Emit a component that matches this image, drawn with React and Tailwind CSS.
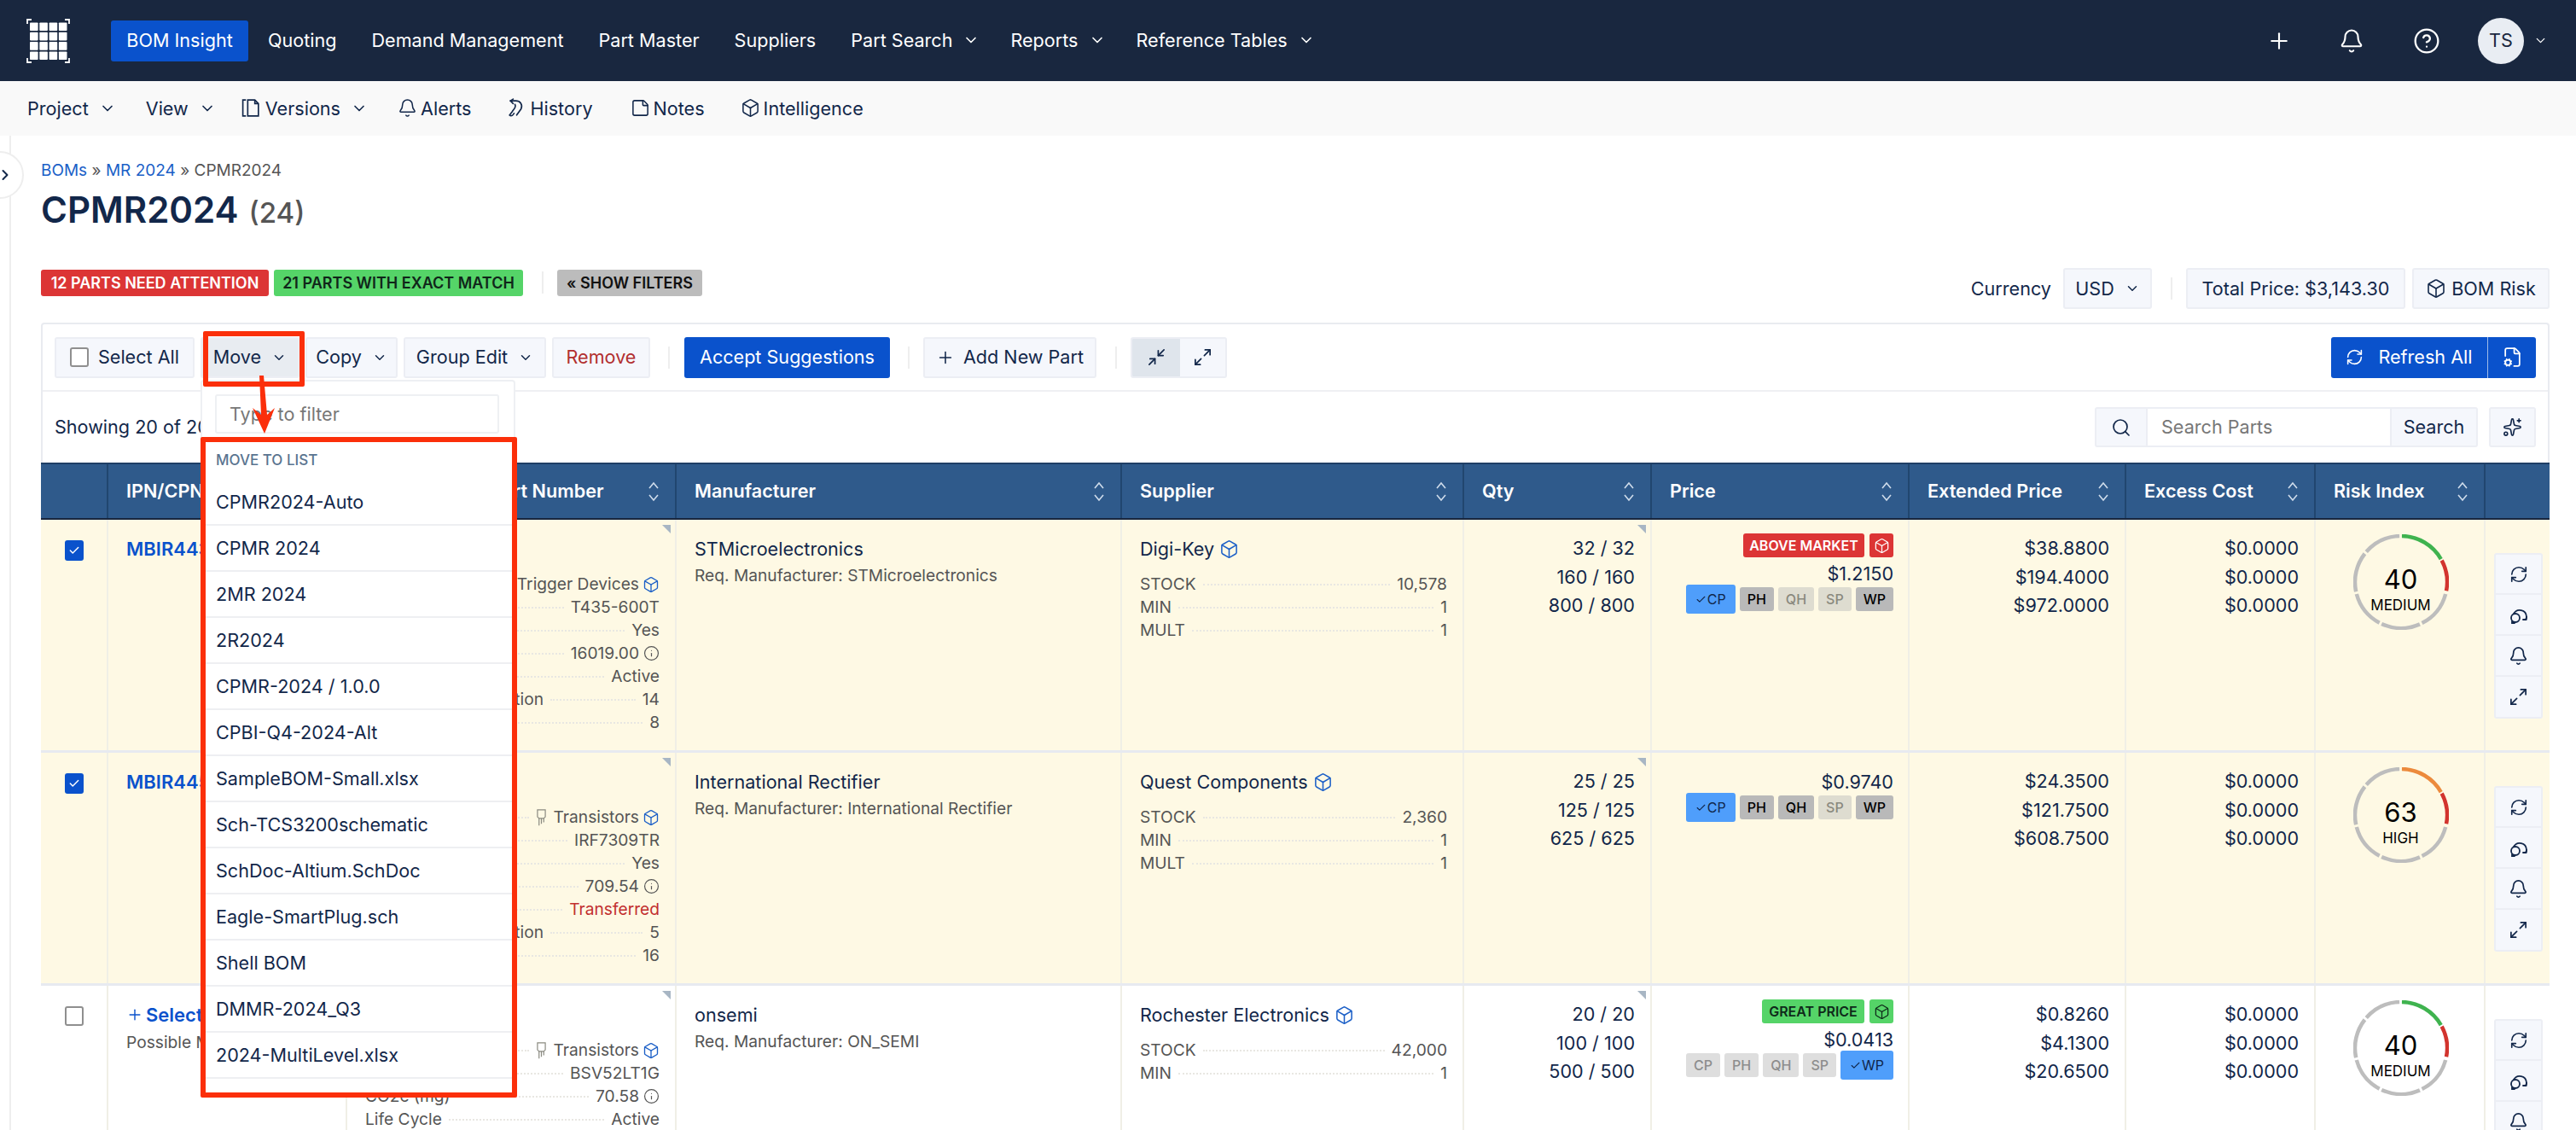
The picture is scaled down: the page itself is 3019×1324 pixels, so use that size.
import {
  Bell, Box, ChevronDown, ChevronRight, CircleHelp, FileCog, Info, Maximize2, Minimize2, Plus, RefreshCw, Search, StickyNote, Sparkles, Check,
} from "lucide-react";

const COLS = "grid-cols-[79px_280px_386px_522px_401px_220px_302px_254px_222px_199px_75px]";
const MENU = ["CPMR2024-Auto", "CPMR 2024", "2MR 2024", "2R2024", "CPMR-2024 / 1.0.0", "CPBI-Q4-2024-Alt", "SampleBOM-Small.xlsx", "Sch-TCS3200schematic", "SchDoc-Altium.SchDoc", "Eagle-SmartPlug.sch", "Shell BOM", "DMMR-2024_Q3", "2024-MultiLevel.xlsx", "CPMR-2024"];

const ROWS = [
  {
    selected: true,
    ipn: "MBIR4435",
    rowBg: "bg-[#fef9e4]",
    spec: [["Category", "Trigger Devices", "cat"], ["Mfr Part", "T435-600T"], ["RoHS", "Yes"], ["CO2e (mg)", "16019.00", "info"], ["Life Cycle", "Active"], ["Number of Termination", "14"], ["Pin Count", "8"]],
    maker: "STMicroelectronics",
    req: "STMicroelectronics",
    supplier: "Digi-Key",
    stats: [["STOCK", "10,578"], ["MIN", "1"], ["MULT", "1"]],
    qty: ["32 / 32", "160 / 160", "800 / 800"],
    badge: { label: "ABOVE MARKET", bg: "bg-[#dc3535]", text: "text-white", w: "w-[142px]" },
    price: "$1.2150",
    chips: [["CP", "sel"], ["PH", "on"], ["QH", "off"], ["SP", "off"], ["WP", "on"]],
    ext: ["$38.8800", "$194.4000", "$972.0000"],
    risk: 40,
    level: "MEDIUM",
    top: "#3fb34f",
  },
  {
    selected: true,
    ipn: "MBIR4451",
    rowBg: "bg-[#fef9e4]",
    spec: [["Category", "Transistors", "tr"], ["Mfr Part", "IRF7309TR"], ["RoHS", "Yes"], ["CO2e (mg)", "709.54", "info"], ["Life Cycle", "Transferred", "red"], ["Number of Termination", "5"], ["Pin Count", "16"]],
    maker: "International Rectifier",
    req: "International Rectifier",
    supplier: "Quest Components",
    stats: [["STOCK", "2,360"], ["MIN", "1"], ["MULT", "1"]],
    qty: ["25 / 25", "125 / 125", "625 / 625"],
    price: "$0.9740",
    chips: [["CP", "sel"], ["PH", "on"], ["QH", "on"], ["SP", "off"], ["WP", "on"]],
    ext: ["$24.3500", "$121.7500", "$608.7500"],
    risk: 63,
    level: "HIGH",
    top: "#ec8a3c",
  },
  {
    selected: false,
    ipn: "Select",
    possible: "Possible Matches",
    rowBg: "bg-white",
    spec: [["Category", "Transistors", "tr"], ["Mfr Part", "BSV52LT1G"], ["CO2e (mg)", "70.58", "info"], ["Life Cycle", "Active"]],
    maker: "onsemi",
    req: "ON_SEMI",
    supplier: "Rochester Electronics",
    stats: [["STOCK", "42,000"], ["MIN", "1"]],
    qty: ["20 / 20", "100 / 100", "500 / 500"],
    badge: { label: "GREAT PRICE", bg: "bg-[#55d468]", text: "text-[#0f2a1a]", w: "w-[120px]" },
    price: "$0.0413",
    chips: [["CP", "dim"], ["PH", "dim"], ["QH", "dim"], ["SP", "dim"], ["WP", "sel"]],
    ext: ["$0.8260", "$4.1300", "$20.6500"],
    risk: 40,
    level: "MEDIUM",
    top: "#3fb34f",
  },
];

function polar(deg) {
  const a = ((deg - 90) * Math.PI) / 180;
  return [56 + 54 * Math.cos(a), 56 + 54 * Math.sin(a)];
}

function Arc({ from, to, color }) {
  const [x1, y1] = polar(from);
  const [x2, y2] = polar(to);
  return <path d={`M${x1} ${y1} A54 54 0 0 1 ${x2} ${y2}`} fill="none" stroke={color} strokeWidth="4.5" />;
}

function Gauge({ value, level, top }) {
  return (
    <div className="relative w-[112px] h-[112px] flex flex-col items-center pt-[31px]">
      <svg viewBox="0 0 112 112" className="absolute inset-0 w-[112px] h-[112px]">
        <Arc from={1} to={60} color={top} />
        <Arc from={62} to={101} color="#d2342e" />
        <Arc from={105} to={153} color="#bdbdbd" />
        <Arc from={156} to={205} color="#bdbdbd" />
        <Arc from={208} to={255} color="#bdbdbd" />
        <Arc from={258} to={308} color="#bdbdbd" />
        <Arc from={311} to={358} color="#bdbdbd" />
      </svg>
      <div className="text-[31px] leading-[44px] text-black">{value}</div>
      <div className="text-[17px] leading-[20px] mt-[-2px] text-black">{level}</div>
    </div>
  );
}

function SortIcon() {
  return (
    <svg viewBox="0 0 14 28" className="w-[14px] h-[28px] shrink-0" fill="none" stroke="#cfdceb" strokeWidth="1.6">
      <path d="M2 10 L7 4 L12 10" />
      <path d="M2 18 L7 24 L12 18" />
    </svg>
  );
}

function LogoMark() {
  const cells = [];
  for (let r = 0; r < 4; r++) {
    for (let c = 0; c < 4; c++) {
      cells.push(<rect key={`${r}-${c}`} x={4 + c * 11.3} y={4.5 + r * 11.3} width="9.6" height="9.6" rx="0.8" fill="white" />);
    }
  }
  return (
    <svg viewBox="0 0 51 52" className="w-[51px] h-[52px]" fill="none">
      {cells}
      <path d="M1 6V1h5M45 1h5v5M1 46v5h5M45 51h5v-5" stroke="white" strokeWidth="1.8" />
    </svg>
  );
}

function VersionsIcon() {
  return (
    <svg viewBox="0 0 24 24" className="w-[25px] h-[25px]" fill="none" stroke="currentColor" strokeWidth="1.6">
      <path d="M6 3H2.500v18H6" />
      <path d="M8 3h8l4 4v14H8z" />
      <path d="M16 3v4h4" />
    </svg>
  );
}

function HistoryIcon() {
  return (
    <svg viewBox="0 0 24 24" className="w-[25px] h-[25px]" fill="none" stroke="currentColor" strokeWidth="1.6" strokeLinecap="round">
      <path d="M6 4h6c5 0 8 4 6 9l-5 7" />
      <path d="M9 2 6 4l3 3" />
      <path d="M11 8c2 3-1 5-3 8l-3 4c2 2 4 0 5-2" />
    </svg>
  );
}

function TransistorIcon() {
  return (
    <svg viewBox="0 0 14 24" className="w-[13px] h-[22px] text-[#8a8a80]" fill="none" stroke="currentColor" strokeWidth="1.3">
      <path d="M2 2h10v9l-2 2H4l-2-2z" />
      <path d="M4 13v9M7 13v7M10 13v5" />
    </svg>
  );
}

function ThreadIcon() {
  return (
    <svg viewBox="0 0 24 24" className="w-[24px] h-[24px]" fill="none" stroke="currentColor" strokeWidth="1.8" strokeLinecap="round">
      <path d="M6 11a8 8 0 0 1 15 3.500c0 1.500-.3 2.500-.8 3.500" />
      <path d="M17 18h3.500l.5-3" />
      <circle cx="8" cy="16" r="5" />
      <path d="M4 20v2h3" />
    </svg>
  );
}

function NavLink({ children, caret }) {
  return (
    <div className={`flex items-center gap-[12px] text-white text-[21.6px] ${caret ? "mr-[-5px]" : ""}`}>
      {children}
      {caret && <ChevronDown className="w-[20px] h-[20px]" strokeWidth={2} />}
    </div>
  );
}

function SubLink({ icon, children, caret, className = "" }) {
  return (
    <div className={`flex items-center gap-[4px] text-[21.6px] ${className}`}>
      {icon}
      <span>{children}</span>
      {caret && <ChevronDown className="w-[20px] h-[20px] ml-[8px]" strokeWidth={2} />}
    </div>
  );
}

function ToolButton({ className, children }) {
  return <div className={`h-[48px] flex items-center justify-center rounded-[3px] border-2 border-[#eceef4] bg-[#f5f7fc] ${className}`}>{children}</div>;
}

function Sep({ className }) {
  return <div className={`w-[2px] h-[26px] bg-[#eeeeee] ${className}`} />;
}

function Chip({ label, state }) {
  if (state === "sel") {
    return (
      <div className="h-[34px] px-[11px] flex items-center rounded-[3px] bg-[#4f9efb] text-[#10264a] text-[16px]">
        <Check className="w-[13px] h-[13px] mr-[1px]" strokeWidth={2} />
        {label}
      </div>
    );
  }
  const looks = {
    on: "bg-[#b9b9b9] text-black",
    off: "bg-[#dedcd0] text-[#8a897e]",
    dim: "bg-[#dedede] text-[#8d8d8d]",
  };
  return <div className={`h-[28px] px-[9px] flex items-center rounded-[3px] text-[16px] font-medium ${looks[state]}`}>{label}</div>;
}

function Leader({ label, value, kind }) {
  return (
    <div className="h-[27px] flex items-center text-[19.2px] text-[#555555] whitespace-nowrap">
      <span>{label}</span>
      <span className="flex-1 mx-[8px] border-t-2 border-dotted border-[#e8e7e2]" />
      {kind === "tr" && <span className="mr-[8px]"><TransistorIcon /></span>}
      <span className={kind === "red" ? "text-[#c22f2f]" : ""}>{value}</span>
      {(kind === "cat" || kind === "tr") && <Box className="w-[20px] h-[20px] ml-[4px] text-[#1b5fc7]" strokeWidth={1.6} />}
      {kind === "info" && <Info className="w-[19px] h-[19px] ml-[5px] text-[#555555]" strokeWidth={1.5} />}
    </div>
  );
}

function Row({ row }) {
  const cell = `${row.rowBg} border-r-2 border-[#f0efe6]`;
  return (
    <div className={`grid ${COLS} h-[270px] overflow-hidden`}>
      <div className={`${cell} flex justify-center pt-[24px]`}>
        {row.selected ? (
          <div className="w-[22px] h-[24px] rounded-[3px] bg-[#0a52cc] flex items-center justify-center">
            <Check className="w-[14px] h-[14px] text-white" strokeWidth={2.5} />
          </div>
        ) : (
          <div className="w-[22px] h-[23px] rounded-[3px] bg-white border-2 border-[#8f8f8f]" />
        )}
      </div>
      <div className={`${cell} pl-[21px] pt-[19px]`}>
        <div className="flex items-center text-[22px] leading-[30px] font-semibold text-[#0a52cc]">
          {row.possible && <Plus className="w-[20px] h-[20px] mr-[3px]" strokeWidth={1.7} />}
          {row.ipn}
        </div>
        {row.possible && <div className="text-[19.2px] leading-[24px] mt-[5px] text-[#555555]">{row.possible}</div>}
      </div>
      <div className={`${cell} relative pl-[21px] pr-[18px] pt-[62px]`}>
        <div className="absolute top-[6px] right-[5px] w-0 h-0 border-t-[10px] border-l-[10px] border-t-[#a8b6c4] border-l-transparent" />
        {row.spec.map(([label, value, kind]) => <Leader key={label} label={label} value={value} kind={kind} />)}
      </div>
      <div className={`${cell} pl-[21px] pt-[19px]`}>
        <div className="text-[21.6px] leading-[30px]">{row.maker}</div>
        <div className="text-[19.2px] leading-[26px] mt-[3px] text-[#555555]">Req. Manufacturer: {row.req}</div>
      </div>
      <div className={`${cell} pl-[21px] pr-[18px] pt-[19px]`}>
        <div className="flex items-center gap-[6px] text-[21.6px] leading-[30px] mb-[13px]">
          {row.supplier}
          <Box className="w-[23px] h-[23px] text-[#1b5fc7]" strokeWidth={1.6} />
        </div>
        {row.stats.map(([label, value]) => <Leader key={label} label={label} value={value} />)}
      </div>
      <div className={`${cell} relative pr-[18px] pt-[17px] text-right text-[21.6px] leading-[33.5px]`}>
        <div className="absolute top-[6px] right-[5px] w-0 h-0 border-t-[10px] border-l-[10px] border-t-[#a8b6c4] border-l-transparent" />
        {row.qty.map((q) => <div key={q}>{q}</div>)}
      </div>
      <div className={`${cell} pr-[17px] flex flex-col items-end ${row.badge ? "pt-[16px]" : "pt-[19px]"}`}>
        {row.badge && (
          <div className="flex gap-[6px]">
            <div className={`${row.badge.w} h-[28px] rounded-[3px] flex items-center justify-center text-[16px] font-semibold ${row.badge.bg} ${row.badge.text}`}>{row.badge.label}</div>
            <div className={`w-[28px] h-[28px] rounded-[3px] flex items-center justify-center ${row.badge.bg} ${row.badge.text}`}><Box className="w-[19px] h-[19px]" strokeWidth={1.6} /></div>
          </div>
        )}
        <div className={`text-[21.6px] leading-[30px] ${row.badge ? "mt-[4px]" : ""}`}>{row.price}</div>
        <div className="flex items-center gap-[5px] h-[28px] mt-[1px]">
          {row.chips.map(([label, state]) => <Chip key={label} label={label} state={state} />)}
        </div>
      </div>
      <div className={`${cell} pr-[18px] pt-[17px] text-right text-[21.6px] leading-[33.5px]`}>
        {row.ext.map((v) => <div key={v}>{v}</div>)}
      </div>
      <div className={`${cell} pr-[18px] pt-[17px] text-right text-[21.6px] leading-[33.5px]`}>
        <div>$0.0000</div>
        <div>$0.0000</div>
        <div>$0.0000</div>
      </div>
      <div className={`${cell} flex justify-center pt-[17px] pl-[2px]`}>
        <Gauge value={row.risk} level={row.level} top={row.top} />
      </div>
      <div className={`${row.rowBg} pl-[10px] pt-[39px]`}>
        <div className="w-[57px] rounded-[3px] border-2 border-[#eceef4] bg-[#f5f7fc] divide-y-2 divide-[#eceef4]">
          <div className="h-[47px] flex items-center justify-center"><RefreshCw className="w-[22px] h-[22px]" strokeWidth={1.8} /></div>
          <div className="h-[48px] flex items-center justify-center"><ThreadIcon /></div>
          <div className="h-[48px] flex items-center justify-center"><Bell className="w-[23px] h-[23px]" strokeWidth={1.8} /></div>
          <div className="h-[47px] flex items-center justify-center"><Maximize2 className="w-[23px] h-[23px]" strokeWidth={1.8} /></div>
        </div>
      </div>
    </div>
  );
}

export default function App() {
  const headers = ["", "IPN/CPN", "Manufacturer Part Number", "Manufacturer", "Supplier", "Qty", "Price", "Extended Price", "Excess Cost", "Risk Index", ""];

  return (
    <div className="relative w-[3019px] h-[1324px] overflow-hidden bg-white text-[#12274a] [font-family:Inter,sans-serif]">
      {/* top nav */}
      <header className="h-[95px] bg-[#19273f] flex items-center pl-[31px] pr-[33px]">
        <LogoMark />
        <div className="ml-[48px] h-[48px] w-[161px] rounded-[3px] bg-[#0a52cc] text-white text-[21.6px] flex items-center justify-center">BOM Insight</div>
        <div className="ml-[23px] flex items-center gap-[41px]">
          <NavLink>Quoting</NavLink>
          <NavLink>Demand Management</NavLink>
          <NavLink>Part Master</NavLink>
          <NavLink>Suppliers</NavLink>
          <NavLink caret>Part Search</NavLink>
          <NavLink caret>Reports</NavLink>
          <NavLink caret>Reference Tables</NavLink>
        </div>
        <div className="ml-auto flex items-center text-white">
          <Plus className="w-[30px] h-[30px]" strokeWidth={1.7} />
          <Bell className="w-[30px] h-[30px] ml-[55px]" strokeWidth={1.7} />
          <CircleHelp className="w-[32px] h-[32px] ml-[57px]" strokeWidth={1.7} />
          <div className="ml-[44px] w-[54px] h-[54px] rounded-full bg-[#e9edf3] text-[#19273f] text-[21.6px] flex items-center justify-center">TS</div>
          <ChevronDown className="w-[17px] h-[17px] ml-[11px]" strokeWidth={1.8} />
        </div>
      </header>

      {/* sub nav */}
      <nav className="h-[64px] bg-[#f9f9f9] flex items-center pl-[32px] gap-[40px]">
        <SubLink caret className="mr-[-5px]">Project</SubLink>
        <SubLink caret className="mr-[-11px]">View</SubLink>
        <SubLink caret className="mr-[-5px]" icon={<VersionsIcon />}>Versions</SubLink>
        <SubLink icon={<Bell className="w-[23px] h-[23px]" strokeWidth={1.6} />}>Alerts</SubLink>
        <SubLink icon={<HistoryIcon />}>History</SubLink>
        <SubLink className="ml-[4px]" icon={<StickyNote className="w-[23px] h-[23px]" strokeWidth={1.6} />}>Notes</SubLink>
        <SubLink className="ml-[2px]" icon={<Box className="w-[23px] h-[23px]" strokeWidth={1.6} />}>Intelligence</SubLink>
      </nav>

      {/* collapsed sidebar rail */}
      <div className="absolute left-[11px] top-[159px] bottom-0 w-[2px] bg-[#eeeeee]" />
      <div className="absolute left-[-28px] top-[177px] w-[56px] h-[56px] rounded-full bg-white border-2 border-[#eeeeee] flex items-center justify-end pr-[10px] text-[#12274a]">
        <ChevronRight className="w-[20px] h-[20px] shrink-0" strokeWidth={2.4} />
      </div>

      <main className="relative pl-[48px] pr-[31px] pt-[29px]">
        <div className="text-[19px] leading-[24px] text-[#555555]">
          <span className="text-[#1b5fc7]">BOMs</span> » <span className="text-[#1b5fc7]">MR 2024</span> » CPMR2024
        </div>
        <div className="mt-[8px] h-[52px] flex items-baseline leading-[52px]">
          <span className="text-[42px] font-semibold">CPMR2024</span>
          <span className="ml-[12px] text-[33px] font-medium text-[#555555]">(24)</span>
        </div>

        <div className="mt-[42px] h-[48px] flex items-start">
          <div className="mt-[2px] h-[31px] w-[267px] rounded-[3px] bg-[#dc3535] text-white text-[18px] font-semibold flex items-center justify-center">12 PARTS NEED ATTENTION</div>
          <div className="mt-[2px] ml-[6px] h-[31px] w-[292px] rounded-[3px] bg-[#55d468] text-[#10261a] text-[18px] font-semibold flex items-center justify-center">21 PARTS WITH EXACT MATCH</div>
          <Sep className="ml-[22px] mt-[4px]" />
          <div className="mt-[2px] ml-[16px] h-[31px] w-[170px] rounded-[3px] bg-[#bcbcbc] text-[#111111] text-[18px] font-semibold flex items-center justify-center">« SHOW FILTERS</div>
          <div className="ml-auto flex items-center">
            <span className="text-[21.6px]">Currency</span>
            <ToolButton className="ml-[14px] w-[104px] text-[21.6px] gap-[12px]">
              USD
              <ChevronDown className="w-[18px] h-[18px]" strokeWidth={2} />
            </ToolButton>
            <Sep className="ml-[22px]" />
            <ToolButton className="ml-[16px] w-[257px] text-[21.6px]">Total Price: $3,143.30</ToolButton>
            <ToolButton className="ml-[8px] w-[161px] text-[21.6px] gap-[6px]">
              <Box className="w-[24px] h-[24px]" strokeWidth={1.6} />
              BOM Risk
            </ToolButton>
          </div>
        </div>

        {/* bom card */}
        <section className="relative mt-[16px] rounded-t-[4px] border-x-2 border-t-2 border-[#e9ebf0]">
          <div className="h-[79px] flex items-center pl-[14px] pr-[14px] border-b-2 border-[#eff0f3] text-[21.6px]">
            <ToolButton className="w-[164px] gap-[11px]">
              <span className="w-[22px] h-[23px] rounded-[3px] bg-white border-2 border-[#8f8f8f]" />
              Select All
            </ToolButton>
            <ToolButton className="ml-[7px] w-[116px] gap-[12px] !bg-[#e8ecf1]">
              Move
              <ChevronDown className="w-[18px] h-[18px]" strokeWidth={2} />
            </ToolButton>
            <ToolButton className="ml-[7px] w-[108px] gap-[12px]">
              Copy
              <ChevronDown className="w-[18px] h-[18px]" strokeWidth={2} />
            </ToolButton>
            <ToolButton className="ml-[7px] w-[167px] gap-[12px]">
              Group Edit
              <ChevronDown className="w-[18px] h-[18px]" strokeWidth={2} />
            </ToolButton>
            <ToolButton className="ml-[7px] w-[115px] text-[#b22f2f]">Remove</ToolButton>
            <Sep className="ml-[21px]" />
            <div className="ml-[17px] w-[241px] h-[48px] rounded-[3px] bg-[#0a52cc] text-white flex items-center justify-center">Accept Suggestions</div>
            <Sep className="ml-[21px]" />
            <ToolButton className="ml-[16px] w-[203px] gap-[10px]">
              <Plus className="w-[22px] h-[22px]" strokeWidth={1.7} />
              Add New Part
            </ToolButton>
            <Sep className="ml-[22px]" />
            <div className="ml-[16px] h-[48px] w-[113px] flex rounded-[3px] border-2 border-[#eceef4] bg-[#f5f7fc] overflow-hidden">
              <div className="w-[56px] bg-[#dfe5ec] flex items-center justify-center"><Minimize2 className="w-[23px] h-[23px]" strokeWidth={1.8} /></div>
              <div className="flex-1 flex items-center justify-center"><Maximize2 className="w-[23px] h-[23px]" strokeWidth={1.8} /></div>
            </div>
            <div className="ml-auto h-[48px] w-[240px] flex rounded-[3px] bg-[#0a52cc] text-white">
              <div className="w-[184px] flex items-center justify-center gap-[17px] border-r border-[#9fbbe8]">
                <RefreshCw className="w-[21px] h-[21px]" strokeWidth={1.8} />
                Refresh All
              </div>
              <div className="flex-1 flex items-center justify-center"><FileCog className="w-[25px] h-[25px]" strokeWidth={1.7} /></div>
            </div>
          </div>

          <div className="h-[83px] flex items-center pl-[14px] pr-[14px] text-[21.6px]">
            <span>Showing 20 of 20 parts</span>
            <div className="ml-auto h-[48px] flex items-center">
              <div className="w-[62px] h-[47px] rounded-l-[3px] border-2 border-[#eceef4] bg-[#f5f7fc] flex items-center justify-center"><Search className="w-[24px] h-[24px]" strokeWidth={1.7} /></div>
              <div className="w-[284px] h-[47px] border-y-2 border-[#eceef4] pl-[16px] flex items-center text-[#777777]">Search Parts</div>
              <div className="w-[103px] h-[47px] rounded-r-[3px] border-2 border-[#eceef4] bg-[#f5f7fc] flex items-center justify-center">Search</div>
              <div className="ml-[13px] w-[55px] h-[47px] rounded-[3px] border-2 border-[#eceef4] bg-[#f5f7fc] flex items-center justify-center"><Sparkles className="w-[23px] h-[23px]" strokeWidth={1.7} /></div>
            </div>
          </div>

          <div className={`grid ${COLS} h-[67px] bg-[#2f5a8b] border-t-2 border-[#1f3f66] border-b-2 border-b-[#19273f] -mx-[2px] relative`}>
            {headers.map((h, i) => (
              <div key={i} className="flex items-center justify-between pl-[21px] pr-[18px] border-r-2 border-[#21466f] text-white text-[21.6px] font-semibold whitespace-nowrap overflow-hidden last:border-r-0">
                <span>{h}</span>
                {h && <SortIcon />}
              </div>
            ))}
          </div>

          <div className="flex flex-col gap-[3px] bg-[#e7eaf0] -mx-[2px]">
            {ROWS.map((r) => <Row key={r.ipn} row={r} />)}
          </div>

          {/* move to list menu */}
          <div className="absolute left-[185px] top-[65px] w-[369px] h-[841px] overflow-hidden rounded-[4px] bg-white border-2 border-[#eef0f3] z-10">
            <div className="pt-[15px] px-[15px]">
              <input placeholder="Type to filter" className="w-[333px] h-[46px] pl-[15px] rounded-[3px] border-2 border-[#eef0f3] text-[21.6px] placeholder:text-[#777777] outline-none" />
            </div>
            <div className="h-[54px] pl-[16px] pt-[19px] text-[17px] font-medium text-[#5a7490]">MOVE TO LIST</div>
            {MENU.map((m) => (
              <div key={m} className="h-[54px] pl-[16px] flex items-center text-[21.6px] border-b-2 border-[#eeeff2]">{m}</div>
            ))}
          </div>
        </section>
      </main>

      {/* red callouts over the screenshot */}
      <div className="absolute left-[238px] top-[388px] w-[119px] h-[65px] border-[6px] border-[#fb2f0a] rounded-[2px] z-20" />
      <div className="absolute left-[235px] top-[512px] w-[371px] h-[774px] border-[6px] border-[#fb2f0a] rounded-[2px] z-20" />
      <svg className="absolute left-[290px] top-[438px] w-[40px] h-[74px] z-20" viewBox="0 0 40 74">
        <path d="M14 2 L19 2 L23 48 L32 40 L20 70 L6 40 L16 48 Z" fill="#fb2f0a" />
      </svg>
    </div>
  );
}
